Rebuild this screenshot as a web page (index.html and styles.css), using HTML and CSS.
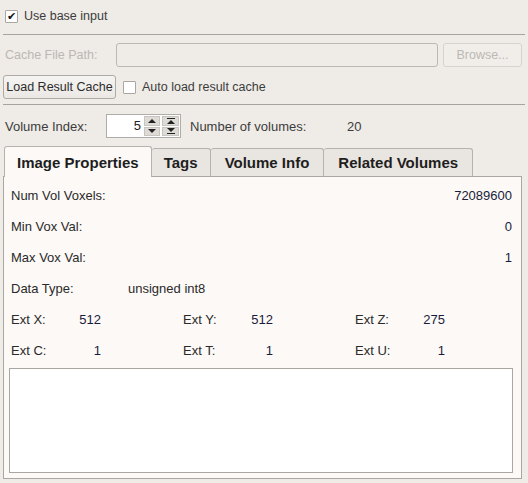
FILE: index.html
```html
<!DOCTYPE html>
<html lang="en">
<head>
  <meta charset="UTF-8">
  <title>Volume Properties</title>
  <link rel="stylesheet" href="styles.css">
</head>
<body>
  <div class="form">
    <!-- base input -->
    <label class="check-row">
      <span class="check checked">&#10004;</span>
      <span>Use base input</span>
    </label>
    <div class="sep sep-1"></div>

    <!-- result cache -->
    <div class="row cache-row">
      <span class="label cache-label disabled">Cache File Path:</span>
      <span class="path-input"></span>
      <span class="btn btn-disabled">Browse...</span>
    </div>
    <div class="row load-row">
      <span class="btn btn-load">Load Result Cache</span>
      <label class="check-row inline">
        <span class="check"></span>
        <span>Auto load result cache</span>
      </label>
    </div>
    <div class="sep sep-2"></div>

    <!-- volume index -->
    <div class="row index-row">
      <span class="label index-label">Volume Index:</span>
      <div class="spin">
        <span class="spin-value">5</span>
        <div class="spin-btns">
          <span class="spin-btn up"><i class="tri-up"></i></span>
          <span class="spin-btn down"><i class="tri-down"></i></span>
        </div>
        <div class="spin-btns">
          <span class="spin-btn up"><i class="bar"></i><i class="tri-up"></i></span>
          <span class="spin-btn down"><i class="tri-down"></i><i class="bar"></i></span>
        </div>
      </div>
      <span class="label count-label">Number of volumes:</span>
      <span class="count">20</span>
    </div>

    <!-- tabs -->
    <div class="tabs">
      <span class="tab active">Image Properties</span>
      <span class="tab">Tags</span>
      <span class="tab wide">Volume Info</span>
      <span class="tab wide">Related Volumes</span>
    </div>
    <div class="panel">
      <div class="prop">
        <span>Num Vol Voxels:</span>
        <span class="val">72089600</span>
      </div>
      <div class="prop">
        <span>Min Vox Val:</span>
        <span class="val">0</span>
      </div>
      <div class="prop">
        <span>Max Vox Val:</span>
        <span class="val">1</span>
      </div>
      <div class="prop type-row">
        <span class="type-label">Data Type:</span>
        <span>unsigned int8</span>
      </div>
      <div class="prop ext-row">
        <div class="ext"><span>Ext X:</span><span class="val">512</span></div>
        <div class="ext"><span>Ext Y:</span><span class="val">512</span></div>
        <div class="ext"><span>Ext Z:</span><span class="val">275</span></div>
      </div>
      <div class="prop ext-row">
        <div class="ext"><span>Ext C:</span><span class="val">1</span></div>
        <div class="ext"><span>Ext T:</span><span class="val">1</span></div>
        <div class="ext"><span>Ext U:</span><span class="val">1</span></div>
      </div>
      <div class="notes"></div>
    </div>
  </div>
</body>
</html>
```
FILE: styles.css
```css
/* reset */
* {
  margin: 0;
  padding: 0;
  box-sizing: border-box;
}
body {
  background-color: #efebe7;
  font-family: "Liberation Sans", Arial, sans-serif;
  font-size: 12.5px;
  color: #3c3c3c;
}
.form {
  padding: 4px 3px 0 3px;
}
/* checkbox rows */
.check-row {
  display: flex;
  align-items: center;
  height: 24px;
  padding-left: 2px;
  font-size: 12.5px;
}
.check-row.inline {
  margin-left: 5px;
}
.check {
  width: 13px;
  height: 13px;
  margin-right: 6px;
  border: 1px solid #aaa6a2;
  border-radius: 1px;
  background-color: #fff;
  color: #111;
  font-family: "DejaVu Sans", sans-serif;
  font-size: 11px;
  font-weight: bold;
  line-height: 11px;
  text-align: center;
}
/* separators */
.sep {
  height: 1px;
  background-color: #a6a29e;
}
.sep-1 {
  margin-top: 6px;
}
.sep-2 {
  margin-top: 5px;
}
/* generic rows */
.row {
  display: flex;
  align-items: center;
  height: 24px;
}
.cache-row {
  margin-top: 8px;
}
.load-row {
  margin-top: 8px;
}
.index-row {
  margin-top: 9px;
}
.label {
  flex-shrink: 0;
  padding-left: 2px;
}
.disabled {
  color: #bcb8b4;
}
.cache-label {
  width: 113px;
}
.path-input {
  width: 322px;
  height: 24px;
  border: 1px solid #bcb8b4;
  border-radius: 3px;
}
/* buttons */
.btn {
  display: flex;
  align-items: center;
  justify-content: center;
  height: 24px;
  border: 1px solid #aeaaa6;
  border-radius: 3px;
  background: linear-gradient(#f6f4f2, #ebe8e4);
  color: #2c2c2c;
}
.btn-disabled {
  width: 79px;
  margin-left: 5px;
  border-color: #d6d2ce;
  background: #f1eeea;
  color: #bcb8b4;
}
.btn-load {
  width: 113px;
}
/* spin box */
.index-label {
  width: 103px;
  font-size: 13px;
}
.spin {
  display: flex;
  width: 75px;
  height: 24px;
  border: 1px solid #b0aca8;
  background-color: #fff;
}
.spin-value {
  flex: 1;
  padding-right: 2px;
  line-height: 22px;
  text-align: right;
  font-size: 13px;
  color: #222;
}
.spin-btns {
  display: flex;
  flex-direction: column;
  width: 16px;
  margin: 1px;
  gap: 1px;
}
.spin-btns + .spin-btns {
  width: 17px;
  margin-left: 1px;
}
.spin-btn {
  flex: 1;
  display: flex;
  flex-direction: column;
  align-items: center;
  justify-content: center;
  background-color: #dedad6;
  border: 1px solid #c8c4c0;
}
.tri-up, .tri-down {
  width: 0;
  height: 0;
  border-left: 4px solid transparent;
  border-right: 4px solid transparent;
}
.tri-up {
  border-bottom: 4px solid #222;
}
.tri-down {
  border-top: 4px solid #222;
}
.bar {
  width: 8px;
  height: 1px;
  margin: 1px 0;
  background-color: #222;
}
.count-label {
  width: 159px;
  margin-left: 7px;
  font-size: 13px;
}
.count {
  font-size: 13px;
}
/* tabs */
.tabs {
  display: flex;
  align-items: flex-end;
  height: 30px;
  margin-top: 8px;
  padding-left: 1px;
}
.tab {
  height: 28px;
  padding: 0 12px;
  border: 1px solid #b6b2ae;
  border-bottom: none;
  border-left: none;
  border-radius: 3px 3px 0 0;
  background-color: #e9e5e1;
  font-size: 15px;
  font-weight: bold;
  line-height: 28px;
  color: #1e1e1e;
}
.tab.wide {
  padding: 0 14px;
}
.tab.active {
  position: relative;
  z-index: 1;
  height: 31px;
  margin-bottom: -1px;
  border-left: 1px solid #b6b2ae;
  background-color: #fcf9f6;
  line-height: 31px;
}
/* panel */
.panel {
  width: 519px;
  height: 303px;
  padding: 3px 8px 5px 7px;
  border: 1px solid #aaa6a2;
  background-color: #fcf9f6;
  font-size: 13px;
}
.prop {
  display: flex;
  align-items: center;
  justify-content: space-between;
  height: 31px;
  padding-right: 1px;
  color: #2a2a2a;
}
.val {
  color: #1a1c3c;
}
.type-row {
  justify-content: flex-start;
}
.type-label {
  width: 117px;
}
.ext-row {
  justify-content: flex-start;
}
.ext {
  display: flex;
  flex-shrink: 0;
  justify-content: space-between;
  width: 90px;
  margin-right: 82px;
}
.ext:last-child {
  margin-right: 0;
}
.notes {
  height: 105px;
  margin: 2px 0 0 -2px;
  border: 1px solid #aaa6a2;
  background-color: #fff;
}
```
